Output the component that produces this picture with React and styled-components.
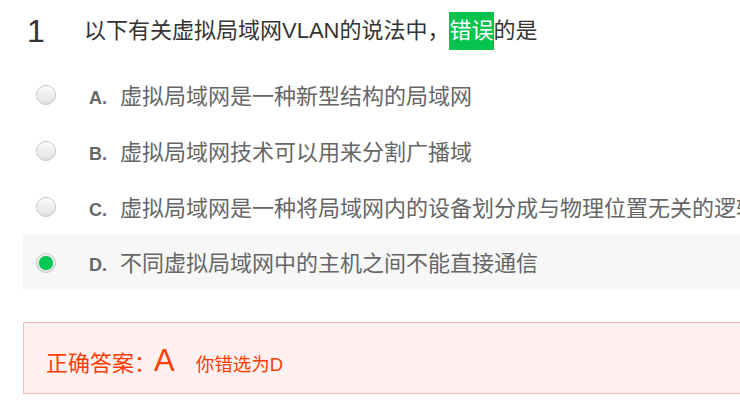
import React from "react";
import styled, { createGlobalStyle } from "styled-components";

const Global = createGlobalStyle`
  html, body { margin: 0; padding: 0; background: #fff; overflow: hidden; }
  body { font-family: "Liberation Sans", "Noto Sans CJK SC", sans-serif; }
`;

const Page = styled.div`
  width: 900px;
  padding: 0 0 0 23px;
  box-sizing: border-box;
`;

const Title = styled.div`
  display: flex;
  align-items: center;
  height: 62px;
  padding-left: 4px;
  color: #333;
`;

const Num = styled.span`
  font-size: 32px;
  width: 57px;
  line-height: 1;
  font-family: "Liberation Sans", sans-serif;
`;

const Stem = styled.span`
  font-size: 22px;
  white-space: nowrap;
`;

const Mark = styled.span`
  display: inline-block;
  background: #08c24e;
  color: #fff;
  line-height: 38px;
`;

const List = styled.div`
  display: flex;
  flex-direction: column;
  margin-top: 5px;
`;

const Option = styled.div`
  display: flex;
  align-items: center;
  height: ${(p) => (p.$last ? 55 : 56)}px;
  padding-left: 13px;
  background: ${(p) => (p.$selected ? "#f7f7f7" : "transparent")};
  white-space: nowrap;
`;

const Radio = styled.span`
  box-sizing: border-box;
  width: 20px;
  height: 20px;
  border-radius: 50%;
  border: 1px solid #c6c6c6;
  background: ${(p) =>
    p.$checked
      ? "radial-gradient(circle, #00c853 0 6.5px, #e6e6e6 7.5px)"
      : "linear-gradient(#fbfbfb, #e2e2e2)"};
  box-shadow: inset 0 1px 1px rgba(255, 255, 255, 0.8);
  flex: none;
`;

const Content = styled.span`
  display: flex;
  align-items: baseline;
  margin-left: 33px;
  margin-top: -3px;
`;

const Letter = styled.span`
  width: 31px;
  font-size: 18px;
  font-weight: bold;
  color: #666;
`;

const Text = styled.span`
  font-size: 22px;
  color: #666;
`;

const Answer = styled.div`
  margin-top: 32px;
  height: 72px;
  box-sizing: border-box;
  border: 1px solid #f7baba;
  background: #fff1f1;
  display: flex;
  align-items: baseline;
  padding: 20px 0 0 22px;
  color: #ff3d00;
  white-space: nowrap;
`;

const Label = styled.span`
  font-size: 22px;
`;

const Right = styled.span`
  font-size: 31px;
  margin-left: -2px;
  font-family: "Liberation Sans", sans-serif;
`;

const Yours = styled.span`
  font-size: 18.5px;
  margin-left: 21px;
`;

const options = [
  ["A", "虚拟局域网是一种新型结构的局域网"],
  ["B", "虚拟局域网技术可以用来分割广播域"],
  ["C", "虚拟局域网是一种将局域网内的设备划分成与物理位置无关的逻辑组的技术"],
  ["D", "不同虚拟局域网中的主机之间不能直接通信"],
];

export default function App() {
  return (
    <>
      <Global />
      <Page>
        <Title>
          <Num>1</Num>
          <Stem>
            以下有关虚拟局域网VLAN的说法中，<Mark>错误</Mark>的是
          </Stem>
        </Title>
        <List>
          {options.map(([k, t], i) => (
            <Option key={k} $selected={k === "D"} $last={i === 3}>
              <Radio $checked={k === "D"} />
              <Content>
                <Letter>{k}.</Letter>
                <Text>{t}</Text>
              </Content>
            </Option>
          ))}
        </List>
        <Answer>
          <Label>正确答案：</Label>
          <Right>A</Right>
          <Yours>你错选为D</Yours>
        </Answer>
      </Page>
    </>
  );
}
